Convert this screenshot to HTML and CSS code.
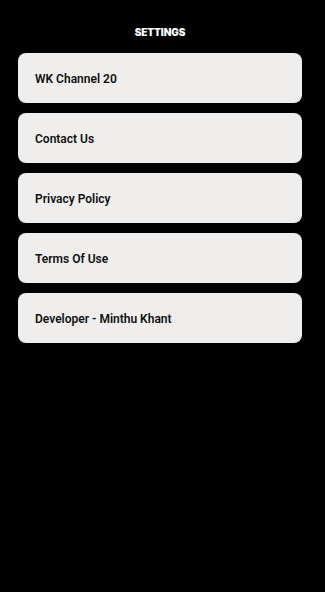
FILE: index.html
```html
<!DOCTYPE html>
<html>
<head>
<meta charset="utf-8">
<link rel="stylesheet" href="styles.css">
</head>
<body>
<div class="screen">
  <h1 class="title">SETTINGS</h1>
  <ul class="menu">
    <li class="card">WK Channel 20</li>
    <li class="card">Contact Us</li>
    <li class="card">Privacy Policy</li>
    <li class="card">Terms Of Use</li>
    <li class="card">Developer - Minthu Khant</li>
  </ul>
</div>
</body>
</html>
```
FILE: styles.css
```css
html, body {
  margin: 0;
  padding: 0;
  background: #000;
}
.screen {
  width: 325px;
  height: 592px;
  background: #000;
  display: flex;
  flex-direction: column;
  box-sizing: border-box;
  padding-top: 27px;
}
.title {
  margin: 0 0 15px 0;
  text-align: center;
  color: #fff;
  font-family: "Inter", "DejaVu Sans", sans-serif;
  font-weight: 900;
  font-size: 10px;
  line-height: 11px;
  letter-spacing: -0.1px;
  padding-right: 5px;
}
.menu {
  list-style: none;
  margin: 0;
  padding: 0 23px 0 18px;
  display: flex;
  flex-direction: column;
  gap: 10px;
}
.card {
  height: 50px;
  box-sizing: border-box;
  background: #efeeec;
  border-radius: 8px;
  display: flex;
  align-items: center;
  padding: 2px 0 0 17px;
  color: #111;
  font-family: "Roboto", "Liberation Sans", sans-serif;
  font-weight: 600;
  font-size: 12px;
}
```
